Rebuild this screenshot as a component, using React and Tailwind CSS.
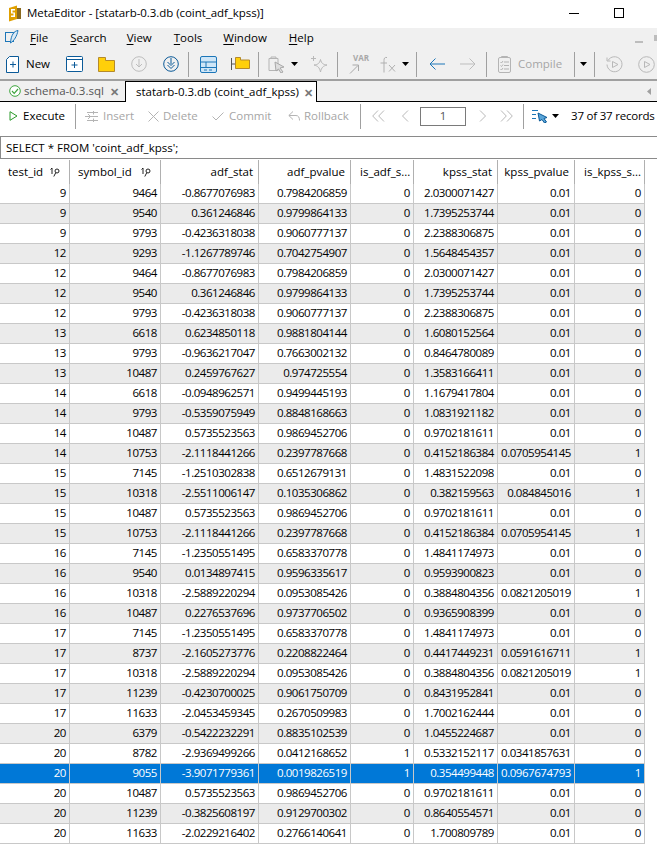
import React from 'react';

const rows = [
  ['9', '9464', '-0.8677076983', '0.7984206859', '0', '2.0300071427', '0.01', '0'],
  ['9', '9540', '0.361246846', '0.9799864133', '0', '1.7395253744', '0.01', '0'],
  ['9', '9793', '-0.4236318038', '0.9060777137', '0', '2.2388306875', '0.01', '0'],
  ['12', '9293', '-1.1267789746', '0.7042754907', '0', '1.5648454357', '0.01', '0'],
  ['12', '9464', '-0.8677076983', '0.7984206859', '0', '2.0300071427', '0.01', '0'],
  ['12', '9540', '0.361246846', '0.9799864133', '0', '1.7395253744', '0.01', '0'],
  ['12', '9793', '-0.4236318038', '0.9060777137', '0', '2.2388306875', '0.01', '0'],
  ['13', '6618', '0.6234850118', '0.9881804144', '0', '1.6080152564', '0.01', '0'],
  ['13', '9793', '-0.9636217047', '0.7663002132', '0', '0.8464780089', '0.01', '0'],
  ['13', '10487', '0.2459767627', '0.974725554', '0', '1.3583166411', '0.01', '0'],
  ['14', '6618', '-0.0948962571', '0.9499445193', '0', '1.1679417804', '0.01', '0'],
  ['14', '9793', '-0.5359075949', '0.8848168663', '0', '1.0831921182', '0.01', '0'],
  ['14', '10487', '0.5735523563', '0.9869452706', '0', '0.9702181611', '0.01', '0'],
  ['14', '10753', '-2.1118441266', '0.2397787668', '0', '0.4152186384', '0.0705954145', '1'],
  ['15', '7145', '-1.2510302838', '0.6512679131', '0', '1.4831522098', '0.01', '0'],
  ['15', '10318', '-2.5511006147', '0.1035306862', '0', '0.382159563', '0.084845016', '1'],
  ['15', '10487', '0.5735523563', '0.9869452706', '0', '0.9702181611', '0.01', '0'],
  ['15', '10753', '-2.1118441266', '0.2397787668', '0', '0.4152186384', '0.0705954145', '1'],
  ['16', '7145', '-1.2350551495', '0.6583370778', '0', '1.4841174973', '0.01', '0'],
  ['16', '9540', '0.0134897415', '0.9596335617', '0', '0.9593900823', '0.01', '0'],
  ['16', '10318', '-2.5889220294', '0.0953085426', '0', '0.3884804356', '0.0821205019', '1'],
  ['16', '10487', '0.2276537696', '0.9737706502', '0', '0.9365908399', '0.01', '0'],
  ['17', '7145', '-1.2350551495', '0.6583370778', '0', '1.4841174973', '0.01', '0'],
  ['17', '8737', '-2.1605273776', '0.2208822464', '0', '0.4417449231', '0.0591616711', '1'],
  ['17', '10318', '-2.5889220294', '0.0953085426', '0', '0.3884804356', '0.0821205019', '1'],
  ['17', '11239', '-0.4230700025', '0.9061750709', '0', '0.8431952841', '0.01', '0'],
  ['17', '11633', '-2.0453459345', '0.2670509983', '0', '1.7002162444', '0.01', '0'],
  ['20', '6379', '-0.5422232291', '0.8835102539', '0', '1.0455224687', '0.01', '0'],
  ['20', '8782', '-2.9369499266', '0.0412168652', '1', '0.5332152117', '0.0341857631', '0'],
  ['20', '9055', '-3.9071779361', '0.0019826519', '1', '0.354499448', '0.0967674793', '1'],
  ['20', '10487', '0.5735523563', '0.9869452706', '0', '0.9702181611', '0.01', '0'],
  ['20', '11239', '-0.3825608197', '0.9129700302', '0', '0.8640554571', '0.01', '0'],
  ['20', '11633', '-2.0229216402', '0.2766140641', '0', '1.700809789', '0.01', '0'],
];

const columns = ['w-[70px]', 'w-[91px]', 'w-[98px]', 'w-[92px]', 'w-[63px]', 'w-[84px]', 'w-[77px]', 'w-[70px]'];

const Sep = ({ className = '' }) => <div className={`w-px h-[25px] bg-[#a0a0a0] shrink-0 ${className}`} />;

const Caret = ({ className = '' }) => (
  <svg width="7" height="4" viewBox="0 0 7 4" className={`shrink-0 ${className}`}>
    <path d="M0 0h7L3.500 4z" fill="#000" />
  </svg>
);

const Logo = () => (
  <svg width="15" height="17" viewBox="0 0 15 17" className="shrink-0">
    <path d="M1 3l8-2.500V14l-8 2.500z" fill="#e0a000" />
    <path d="M9 3h4v11H9z" fill="#8a6a20" />
    <path d="M3 4h4v1.500H4.500v2H7V12H3v-1.500h2.500v-2H3z" fill="#fff" />
  </svg>
);

const Pen = () => (
  <svg width="14" height="15" viewBox="0 0 14 15" className="shrink-0">
    <rect x="0.500" y="2.500" width="8" height="9" fill="none" stroke="#1c76b8" />
    <path d="M13 0.500C9 1 6 5 5.500 13C9 11 12 6 13 0.500z" fill="#dbeaf5" stroke="#1c76b8" />
  </svg>
);

const NewFile = () => (
  <svg width="14" height="17" viewBox="0 0 14 17" className="shrink-0">
    <path d="M0.500 3.500l3-3h9v16h-12z" fill="#fff" stroke="#0b5a98" />
    <path d="M7 5.500v6M4 8.500h6" stroke="#0b5a98" fill="none" />
  </svg>
);

const NewTab = () => (
  <svg width="17" height="16" viewBox="0 0 17 16" className="shrink-0">
    <rect x="0.500" y="0.500" width="16" height="15" rx="1" fill="#fff" stroke="#0b5a98" />
    <path d="M0.500 3.500h16M8.500 6v6M5.500 9h6" stroke="#0b5a98" fill="none" />
  </svg>
);

const Folder = () => (
  <svg width="17" height="15" viewBox="0 0 17 15" className="shrink-0">
    <path d="M0.500 14.500V0.500h7v3h9v11z" fill="#ffcf0a" stroke="#b58a2a" />
  </svg>
);

const CircleArrow = ({ color }) => (
  <svg width="16" height="16" viewBox="0 0 16 16" className="shrink-0">
    <circle cx="8" cy="8" r="7.300" fill="none" stroke={color} />
    <path d="M8 3v8M5 8l3 3 3-3" fill="none" stroke={color} />
  </svg>
);

const CircleDouble = () => (
  <svg width="16" height="16" viewBox="0 0 16 16" className="shrink-0">
    <circle cx="8" cy="8" r="7.300" fill="none" stroke="#0b5a98" />
    <path d="M8 2v6M4.500 6L8 9.500 11.500 6M4.500 9L8 12.500 11.500 9" fill="none" stroke="#0b5a98" />
  </svg>
);

const Layout = () => (
  <svg width="17" height="17" viewBox="0 0 17 17" className="shrink-0">
    <rect x="0.500" y="0.500" width="16" height="16" rx="1.500" fill="#cfe6f7" stroke="#1c76b8" />
    <path d="M0.500 6h16M0.500 11.500h16M6 6v5.500M4 14h3M9 14h3" stroke="#1c76b8" fill="none" />
  </svg>
);

const FolderTree = () => (
  <svg width="19" height="14" viewBox="0 0 19 14" className="shrink-0">
    <path d="M0.500 1v12M0.500 7h4" stroke="#555" fill="none" />
    <path d="M4.500 11.500V0.500h5v2.500h9v8.500z" fill="#ffcf0a" stroke="#b58a2a" />
  </svg>
);

const ClipCursor = () => (
  <svg width="17" height="17" viewBox="0 0 17 17" className="shrink-0">
    <path d="M1 2.500h9v12H1z" fill="none" stroke="#b4b4b4" />
    <path d="M3 2.500V1h5v1.500" fill="none" stroke="#b4b4b4" />
    <path d="M7 6l9 5-4 1 3 4-2 1-2.500-4L8 15z" fill="#dedede" stroke="#a8a8a8" />
  </svg>
);

const Sparkle = () => (
  <svg width="18" height="18" viewBox="0 0 18 18" className="shrink-0">
    <path d="M10.500 4.500c1 4 2.500 5 6.500 5.500-4 1-5.500 2.500-6.500 7-1-4.500-2.500-6-6.500-7 4-.5 5.500-1.500 6.500-5.500z" fill="none" stroke="#b8b8b8" />
    <path d="M3.500 1v5M1 3.500h5" stroke="#b8b8b8" fill="none" />
  </svg>
);

const VarIcon = () => (
  <div className="relative w-[18px] h-[18px] shrink-0">
    <span className="absolute left-[4px] top-[-3px] text-[8px] font-bold text-[#a8a8a8] leading-[12px]">VAR</span>
    <svg width="14" height="10" viewBox="0 0 14 10" className="absolute left-0 top-[9px]">
      <path d="M1 9.500L9 1.500M3.500 1h6v6" fill="none" stroke="#a8a8a8" />
    </svg>
  </div>
);

const FxIcon = () => (
  <svg width="17" height="17" viewBox="0 0 17 17" className="shrink-0">
    <path d="M8 1.500C5.500 1 5 2.500 5 4.500V16.500M1.500 7H8M10 9l6 6.500M16 9l-6 6.500" fill="none" stroke="#b0b0b0" />
  </svg>
);

const Arrow = ({ color, left }) => (
  <svg width="16" height="12" viewBox="0 0 16 12" className="shrink-0">
    <path d={left ? 'M16 6H1M6.500 .5L1 6l5.500 5.500' : 'M0 6h15M9.500 .5L15 6l-5.500 5.500'} fill="none" stroke={color} />
  </svg>
);

const DocList = () => (
  <svg width="13" height="17" viewBox="0 0 13 17" className="shrink-0">
    <rect x="0.500" y="1.500" width="12" height="15" rx="1.500" fill="none" stroke="#b4b4b4" />
    <path d="M3.500 1.500V0.500h6v1M6 6h5M6 9.500h5M6 13h5M2.500 6l1 1 1.500-2M2.500 9.500l1 1 1.500-2M2.500 13l1 1 1.500-2" fill="none" stroke="#b4b4b4" />
  </svg>
);

const Replay = () => (
  <svg width="17" height="17" viewBox="0 0 17 17" className="shrink-0">
    <path d="M2 4.500A7.500 7.500 0 1 1 1 8.500" fill="none" stroke="#b8b8b8" />
    <path d="M1 1.500v3.500h3.500" fill="none" stroke="#b8b8b8" />
    <path d="M6.500 5.500l5.500 3-5.500 3z" fill="none" stroke="#b8b8b8" />
  </svg>
);

const PlayCircle = () => (
  <svg width="17" height="17" viewBox="0 0 17 17" className="shrink-0">
    <circle cx="8.500" cy="8.500" r="7.800" fill="none" stroke="#b8b8b8" />
    <path d="M6.500 5.500l5.500 3-5.500 3z" fill="none" stroke="#b8b8b8" />
  </svg>
);

const KeySort = () => (
  <svg width="10" height="10" viewBox="0 0 10 10" className="shrink-0">
    <path d="M.5 2.500L2 1v6" fill="none" stroke="#222" />
    <circle cx="7" cy="4" r="2" fill="none" stroke="#222" />
    <path d="M5.800 5.600L3.800 9.500" fill="none" stroke="#222" />
  </svg>
);

const Chevrons = ({ d, w = 13 }) => (
  <svg width={w} height="12" viewBox={`0 0 ${w} 12`} className="shrink-0">
    <path d={d} fill="none" stroke="#b8b8b8" />
  </svg>
);

const Action = ({ icon, label, className = '' }) => (
  <div className={`flex items-center text-[#a6a6a6] shrink-0 ${className}`}>
    {icon}
    <span>{label}</span>
  </div>
);

const Menu = ({ u, rest, className }) => (
  <span className={className}>
    <span className="underline underline-offset-2">{u}</span>
    {rest}
  </span>
);

export default function App() {
  return (
    <div className="w-[657px] h-[845px] overflow-hidden bg-white text-[11.500px] text-black font-['Open_Sans','Noto_Sans',sans-serif] leading-none">
      {/* title bar */}
      <div className="h-[28px] flex items-center pl-[8px] pb-[2px] bg-white">
        <Logo />
        <span className="ml-[4px] whitespace-nowrap tracking-[-0.06px]">MetaEditor - [statarb-0.3.db (coint_adf_kpss)]</span>
        <div className="ml-auto flex items-center pr-[33px]">
          <div className="w-[10px] h-px bg-black" />
          <div className="ml-[35px] w-[10px] h-[10px] border border-black" />
        </div>
      </div>

      {/* menu */}
      <div className="h-[21px] bg-[#f0f0f0] flex items-center pl-[5px] pb-[2px] overflow-hidden">
        <Pen />
        <Menu u="F" rest="ile" className="ml-[11px]" />
        <Menu u="S" rest="earch" className="ml-[22px]" />
        <Menu u="V" rest="iew" className="ml-[20px]" />
        <Menu u="T" rest="ools" className="ml-[22px]" />
        <Menu u="W" rest="indow" className="ml-[21px]" />
        <Menu u="H" rest="elp" className="ml-[22px]" />
        <div className="ml-auto flex items-center">
          <div className="w-[8px] h-[2px] bg-[#bdbdbd] mt-[8px]" />
          <div className="ml-[11px] w-[3px] h-[6px] bg-[#bdbdbd]" />
        </div>
      </div>

      {/* main toolbar */}
      <div className="h-[32px] bg-[#f0f0f0] border-b-2 border-[#a0a0a0] flex items-center pl-[6px] overflow-hidden">
        <NewFile />
        <span className="ml-[6px] w-[26px]">New</span>
        <div className="ml-[14px]"><NewTab /></div>
        <div className="ml-[15px]"><Folder /></div>
        <div className="ml-[16px]"><CircleArrow color="#bdbdbd" /></div>
        <div className="ml-[16px]"><CircleDouble /></div>
        <Sep className="ml-[9px]" />
        <div className="ml-[11px]"><Layout /></div>
        <div className="ml-[14px]"><FolderTree /></div>
        <Sep className="ml-[8px]" />
        <div className="ml-[9px]"><ClipCursor /></div>
        <Caret className="ml-[6px]" />
        <div className="ml-[12px]"><Sparkle /></div>
        <Sep className="ml-[9px]" />
        <div className="ml-[11px]"><VarIcon /></div>
        <div className="ml-[12px]"><FxIcon /></div>
        <Caret className="ml-[6px]" />
        <Sep className="ml-[7px]" />
        <div className="ml-[12px]"><Arrow color="#1c76b8" left /></div>
        <div className="ml-[15px]"><Arrow color="#bdbdbd" /></div>
        <Sep className="ml-[10px]" />
        <div className="ml-[11px]"><DocList /></div>
        <span className="ml-[7px] w-[45px] text-[#a6a6a6]">Compile</span>
        <Sep className="ml-[11px] bg-[#707070]" />
        <Caret className="ml-[5px]" />
        <Sep className="ml-[7px]" />
        <div className="ml-[11px]"><Replay /></div>
        <div className="ml-[15px]"><PlayCircle /></div>
      </div>

      {/* tabs */}
      <div className="h-[21px] bg-[#f0f0f0] border-b border-black flex items-end">
        <div className="w-[125px] h-[20px] flex items-center pl-[9px] shrink-0">
          <svg width="12" height="12" viewBox="0 0 12 12" className="shrink-0">
            <circle cx="6" cy="6" r="5.300" fill="#fff" stroke="#3da53d" />
            <path d="M3 6l2.200 2.300L9 4" fill="none" stroke="#3da53d" strokeWidth="1.200" />
          </svg>
          <span className="ml-[3px] text-[#555] whitespace-nowrap">schema-0.3.sql</span>
          <span className="ml-auto mr-[6px] text-[#777] text-[11px] font-bold">✕</span>
        </div>
        <div className="w-[192px] h-[21px] -mb-px bg-white border-x border-t border-black flex items-center pl-[10px] shrink-0">
          <span className="whitespace-nowrap">statarb-0.3.db (coint_adf_kpss)</span>
          <span className="ml-auto mr-[3px] text-[#777] text-[11px] font-bold">✕</span>
        </div>
        <svg width="4" height="7" viewBox="0 0 4 7" className="ml-auto mr-[6px] mb-[6px]">
          <path d="M4 0v7L0 3.500z" fill="#a0a0a0" />
        </svg>
      </div>

      {/* query toolbar */}
      <div className="h-[34px] flex items-center pl-[9px] pb-[6px] whitespace-nowrap overflow-hidden">
        <svg width="9" height="10" viewBox="0 0 9 10" className="shrink-0">
          <path d="M1 .7v8.600L8 5z" fill="#fff" stroke="#2a9a2a" />
        </svg>
        <span className="ml-[5px] w-[41px]">Execute</span>
        <Sep className="ml-[11px]" />
        <Action
          className="ml-[9px] w-[46px]"
          label="Insert"
          icon={
            <svg width="14" height="13" viewBox="0 0 14 13" className="mr-[4px] shrink-0">
              <path d="M0 6.500h13M2 2.500h11M2 10.500h11M8.500 1v3.500M8.500 8.500V12M3 4l2.500 2.500L3 9" fill="none" stroke="#b4b4b4" />
            </svg>
          }
        />
        <Action
          className="ml-[17px] w-[48px]"
          label="Delete"
          icon={
            <svg width="11" height="11" viewBox="0 0 11 11" className="mr-[4px] shrink-0">
              <path d="M.5.5l10 10M10.500.5l-10 10" fill="none" stroke="#b4b4b4" />
            </svg>
          }
        />
        <Action
          className="ml-[16px] w-[60px]"
          label="Commit"
          icon={
            <svg width="12" height="9" viewBox="0 0 12 9" className="mr-[5px] shrink-0">
              <path d="M.5 4.500L4 8l7.500-7.500" fill="none" stroke="#b4b4b4" />
            </svg>
          }
        />
        <Action
          className="ml-[16px] w-[61px]"
          label="Rollback"
          icon={
            <svg width="12" height="10" viewBox="0 0 12 10" className="mr-[4px] shrink-0">
              <path d="M5 .5L.8 4.500 5 8.500M1 4.500h7c2.500 0 3.500 2 3.500 5" fill="none" stroke="#b4b4b4" />
            </svg>
          }
        />
        <Sep className="ml-[11px]" />
        <div className="ml-[11px]"><Chevrons d="M6 .5L.7 6 6 11.500M12 .5L6.700 6 12 11.500" /></div>
        <div className="ml-[16px]"><Chevrons w={8} d="M7 .5L1.500 6 7 11.500" /></div>
        <div className="ml-[11px] w-[46px] h-[19px] border border-[#7a7a7a] flex items-center justify-center text-[#555] shrink-0">1</div>
        <div className="ml-[13px]"><Chevrons w={8} d="M1 .5L6.500 6 1 11.500" /></div>
        <div className="ml-[13px]"><Chevrons d="M1 .5L6.300 6 1 11.500M7 .5L12.300 6 7 11.500" /></div>
        <Sep className="ml-[10px]" />
        <svg width="16" height="14" viewBox="0 0 16 14" className="ml-[8px] shrink-0">
          <path d="M0 1.500h6M0 5.500h4M0 9.500h4" stroke="#1c76b8" fill="none" />
          <path d="M6 4l9 4.500-3 1 2.500 3.500-2 1-2.500-3.500L7.500 12z" fill="#5aa5d8" stroke="#0b5a98" />
        </svg>
        <Caret className="ml-[4px]" />
        <span className="ml-[12px] tracking-[-0.2px]">37 of 37 records</span>
      </div>

      {/* sql box */}
      <div className="h-[23px] border-y border-l border-[#8a8a8a] flex items-center pl-[5px] bg-white">
        SELECT * FROM 'coint_adf_kpss';
      </div>

      {/* grid header */}
      <div className="flex h-[24px] mt-[1px] w-[645px]">
        {['test_id', 'symbol_id', 'adf_stat', 'adf_pvalue', 'is_adf_s...', 'kpss_stat', 'kpss_pvalue', 'is_kpss_s...'].map((name, i) => (
          <div
            key={name}
            className={`${columns[i]} shrink-0 flex items-center border-r border-[#b0b0b0] whitespace-nowrap ${
              i < 2 ? 'pl-[8px]' : i === 4 || i === 7 ? 'pl-[9px]' : 'justify-end pr-[5px]'
            }`}
          >
            <span>{name}</span>
            {i < 2 && <span className="ml-auto mr-[9px]"><KeySort /></span>}
          </div>
        ))}
      </div>

      {/* grid rows */}
      <div className="w-[645px]">
        {rows.map((row, r) => {
          const selected = r === 29;
          return (
            <div
              key={r}
              className={`flex h-[20px] border-b border-[#c8c8c8] ${
                selected ? 'bg-[#0078d7] text-white' : r % 2 === 1 ? 'bg-[#ebebeb]' : 'bg-white'
              }`}
            >
              {row.map((val, c) => (
                <div key={c} className={`${columns[c]} shrink-0 text-right pr-[3px] border-r border-[#c8c8c8] leading-[18px] whitespace-nowrap tracking-[-0.45px]`}>
                  {val}
                </div>
              ))}
            </div>
          );
        })}
      </div>
    </div>
  );
}
